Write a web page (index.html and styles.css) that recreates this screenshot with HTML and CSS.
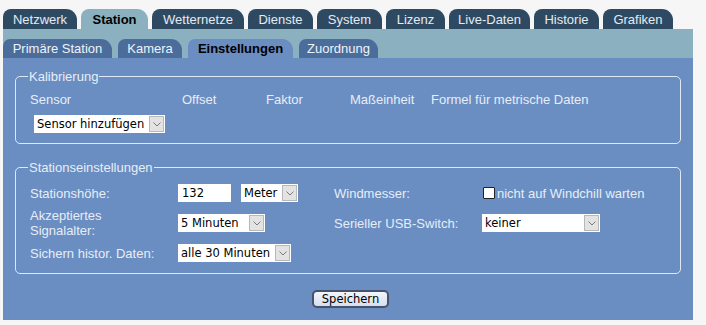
FILE: index.html
```html
<!DOCTYPE html>
<html lang="de">
<head>
    <meta charset="UTF-8">
    <title>Station - Einstellungen</title>
    <link rel="stylesheet" href="styles.css">
</head>
<body>
    <div class="page">
        <ul class="tabs">
            <li class="tab">Netzwerk</li>
            <li class="tab active">Station</li>
            <li class="tab">Wetternetze</li>
            <li class="tab">Dienste</li>
            <li class="tab">System</li>
            <li class="tab">Lizenz</li>
            <li class="tab">Live-Daten</li>
            <li class="tab">Historie</li>
            <li class="tab">Grafiken</li>
        </ul>
        <div class="subbar">
            <ul class="subtabs">
                <li class="subtab">Primäre Station</li>
                <li class="subtab">Kamera</li>
                <li class="subtab active">Einstellungen</li>
                <li class="subtab">Zuordnung</li>
            </ul>
        </div>

        <form class="panel">
            <fieldset class="box calib">
                <legend>Kalibrierung</legend>
                <div class="calib-head">
                    <span>Sensor</span>
                    <span>Offset</span>
                    <span>Faktor</span>
                    <span>Maßeinheit</span>
                    <span>Formel für metrische Daten</span>
                </div>
                <div class="calib-add">
                    <span class="sel sel-sensor">
                        <select><option>Sensor hinzufügen</option></select>
                        <span class="arrow"><svg width="8" height="5" viewBox="0 0 8 5"><path d="M0.5 0.5 L4 4 L7.5 0.5" fill="none" stroke="#7a7a7a" stroke-width="1"/></svg></span>
                    </span>
                </div>
            </fieldset>

            <fieldset class="box station">
                <legend>Stationseinstellungen</legend>
                <div class="grid">
                    <label class="lbl">Stationshöhe:</label>
                    <div class="ctrl">
                        <input class="num" type="text" value="132">
                        <span class="sel sel-unit">
                            <select><option>Meter</option></select>
                            <span class="arrow"><svg width="8" height="5" viewBox="0 0 8 5"><path d="M0.5 0.5 L4 4 L7.5 0.5" fill="none" stroke="#7a7a7a" stroke-width="1"/></svg></span>
                        </span>
                    </div>
                    <label class="lbl">Windmesser:</label>
                    <div class="ctrl">
                        <label class="check"><input type="checkbox">nicht auf Windchill warten</label>
                    </div>

                    <label class="lbl">Akzeptiertes<br>Signalalter:</label>
                    <div class="ctrl">
                        <span class="sel sel-age">
                            <select><option>5 Minuten</option></select>
                            <span class="arrow"><svg width="8" height="5" viewBox="0 0 8 5"><path d="M0.5 0.5 L4 4 L7.5 0.5" fill="none" stroke="#7a7a7a" stroke-width="1"/></svg></span>
                        </span>
                    </div>
                    <label class="lbl">Serieller USB-Switch:</label>
                    <div class="ctrl">
                        <span class="sel sel-usb">
                            <select><option>keiner</option></select>
                            <span class="arrow"><svg width="8" height="5" viewBox="0 0 8 5"><path d="M0.5 0.5 L4 4 L7.5 0.5" fill="none" stroke="#7a7a7a" stroke-width="1"/></svg></span>
                        </span>
                    </div>

                    <label class="lbl">Sichern histor. Daten:</label>
                    <div class="ctrl">
                        <span class="sel sel-save">
                            <select><option>alle 30 Minuten</option></select>
                            <span class="arrow"><svg width="8" height="5" viewBox="0 0 8 5"><path d="M0.5 0.5 L4 4 L7.5 0.5" fill="none" stroke="#7a7a7a" stroke-width="1"/></svg></span>
                        </span>
                    </div>
                </div>
            </fieldset>

            <div class="actions">
                <button type="button">Speichern</button>
            </div>
        </form>
    </div>
</body>
</html>
```

FILE: styles.css
```css
body {
    margin: 0;
    background-color: #f6f6f6;
    font-family: "Liberation Sans", Arial, sans-serif;
    font-size: 13px;
}
.page {
    padding: 9px 0 0 3px;
    width: 690px;
}
ul {
    list-style: none;
    margin: 0;
    padding: 0;
}
.tabs {
    display: flex;
    gap: 4px;
}
.tab {
    flex: none;
    height: 20px;
    line-height: 21px;
    text-align: center;
    background: #2e4a63;
    color: #e4ebf2;
    border-radius: 8px 11px 0 0;
}
.tab:nth-child(1) { width: 74px; }
.tab:nth-child(2) { width: 67px; }
.tab:nth-child(3) { width: 92px; }
.tab:nth-child(4) { width: 65px; }
.tab:nth-child(5) { width: 65px; }
.tab:nth-child(6) { width: 59px; }
.tab:nth-child(7) { width: 81px; }
.tab:nth-child(8) { width: 65px; }
.tab:nth-child(9) { width: 70px; }
.tab.active {
    background: #8bb1c1;
    color: #000;
    font-weight: bold;
}
.subbar {
    background: #8bb1c1;
    height: 29px;
    padding-top: 10px;
    box-sizing: border-box;
}
.subtabs {
    display: flex;
    gap: 6px;
}
.subtab {
    flex: none;
    height: 19px;
    line-height: 20px;
    text-align: center;
    background: #4b6d9b;
    color: #eef3fa;
    border-radius: 7px 11px 0 0;
}
.subtab:nth-child(1) { width: 109px; }
.subtab:nth-child(2) { width: 64px; }
.subtab:nth-child(3) { width: 105px; }
.subtab:nth-child(4) { width: 79px; }
.subtab.active {
    background: #6a8dc2;
    color: #000;
    font-weight: bold;
}
.panel {
    background: #6a8dc2;
    padding: 11px 12px 12px;
    color: #e6edf7;
}
.box {
    margin: 0;
    border: 1px solid #dfe8f4;
    border-radius: 5px;
    min-width: 0;
}
.box legend {
    padding: 0 1px;
    margin-left: -2px;
    line-height: 15px;
}
.calib {
    padding: 8px 14px 10px;
}
.calib-head {
    display: grid;
    grid-template-columns: 152px 84px 84px 81px auto;
    line-height: 15px;
}
.calib-add {
    margin: 8px 0 0 4px;
}
.station {
    margin-top: 16px;
    padding: 3px 14px 5px;
}
.grid {
    display: grid;
    grid-template-columns: 148px 156px 148px auto;
    grid-auto-rows: 30px;
    align-items: center;
}
.lbl {
    line-height: 15px;
}
.ctrl {
    display: flex;
    align-items: center;
    gap: 10px;
}
.num {
    width: 53px;
    height: 18px;
    box-sizing: border-box;
    border: 0;
    padding: 0 4px;
    font-family: "DejaVu Sans", Tahoma, sans-serif;
    font-size: 11.5px;
    color: #000;
    background: #fff;
}
.sel {
    display: inline-flex;
    height: 18px;
    background: #fff;
    box-sizing: border-box;
}
.sel select {
    appearance: none;
    -webkit-appearance: none;
    flex: 1;
    min-width: 0;
    border: 0;
    background: transparent;
    padding: 0 3px;
    height: 18px;
    font-family: "DejaVu Sans", Tahoma, sans-serif;
    font-size: 11.5px;
    color: #000;
}
.arrow {
    width: 15px;
    margin: 1px 1px 1px 0;
    background: #e3e3e3;
    border: 1px solid #b8b8b8;
    box-sizing: border-box;
    display: flex;
    align-items: center;
    justify-content: center;
}
.sel-sensor { width: 131px; }
.sel-unit { width: 57px; }
.sel-age { width: 87px; }
.sel-save { width: 113px; }
.sel-usb { width: 118px; }
.check {
    display: flex;
    align-items: center;
    line-height: 15px;
}
.check input {
    appearance: none;
    -webkit-appearance: none;
    width: 12px;
    height: 12px;
    margin: 0 2px 0 1px;
    background: #fff;
    border: 1px solid #222;
    border-radius: 1px;
}
.actions {
    text-align: center;
    margin-top: 16px;
    padding-left: 5px;
}
button {
    height: 18px;
    padding: 0 8px;
    font-family: "DejaVu Sans", Tahoma, sans-serif;
    font-size: 11.5px;
    color: #000;
    background: linear-gradient(#f2f6fc, #d5e0f0);
    border: 2px solid #46536a;
    border-radius: 5px;
    line-height: 14px;
}
```
